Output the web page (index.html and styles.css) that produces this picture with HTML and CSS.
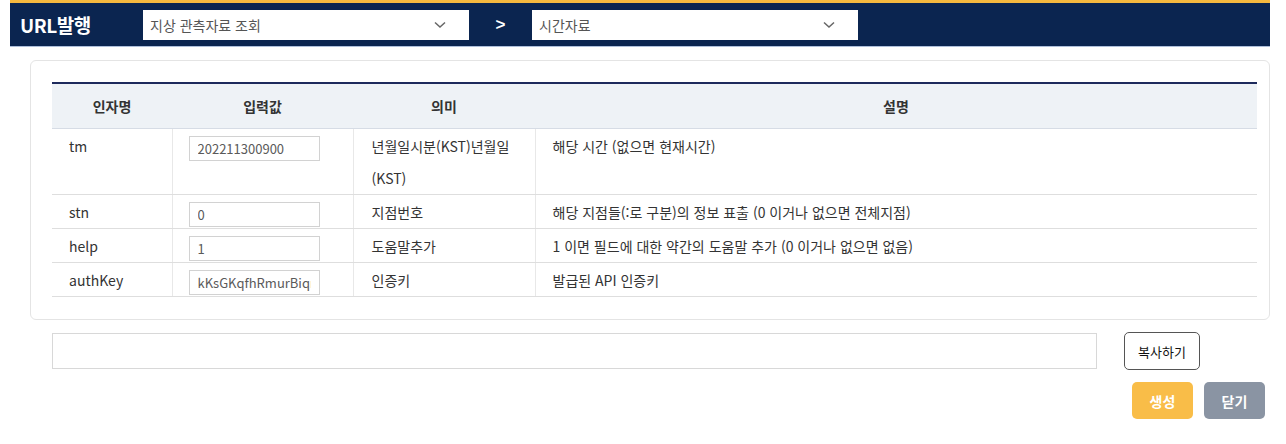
FILE: index.html
```html
<!DOCTYPE html>
<html lang="ko">

<head>
  <meta charset="UTF-8">
  <meta name="viewport" content="width=device-width, initial-scale=1.0">
  <title>URL발행</title>
  <link rel="stylesheet" href="styles.css">
</head>

<body>
  <!-- 상단 선택 바 -->
  <div class="topbar">
    <h1 class="title">URL발행</h1>
    <div class="select">
      <span>지상 관측자료 조회</span>
      <svg width="12" height="8" viewBox="0 0 12 8"><path d="M1 1.5l5 4.5 5-4.5" fill="none" stroke="#666" stroke-width="1.5"/></svg>
    </div>
    <div class="arrow">&gt;</div>
    <div class="select">
      <span>시간자료</span>
      <svg width="12" height="8" viewBox="0 0 12 8"><path d="M1 1.5l5 4.5 5-4.5" fill="none" stroke="#666" stroke-width="1.5"/></svg>
    </div>
  </div>

  <!-- 인자 목록 -->
  <div class="card">
    <table class="params">
      <colgroup>
        <col style="width: 120px;">
        <col style="width: 181px;">
        <col style="width: 182px;">
        <col>
      </colgroup>
      <thead>
        <tr>
          <th>인자명</th>
          <th>입력값</th>
          <th>의미</th>
          <th>설명</th>
        </tr>
      </thead>
      <tbody>
        <tr>
          <td>tm</td>
          <td><input type="text" value="202211300900"></td>
          <td>년월일시분(KST)년월일<br>(KST)</td>
          <td>해당 시간 (없으면 현재시간)</td>
        </tr>
        <tr>
          <td>stn</td>
          <td><input type="text" value="0"></td>
          <td>지점번호</td>
          <td>해당 지점들(:로 구분)의 정보 표출 (0 이거나 없으면 전체지점)</td>
        </tr>
        <tr>
          <td>help</td>
          <td><input type="text" value="1"></td>
          <td>도움말추가</td>
          <td>1 이면 필드에 대한 약간의 도움말 추가 (0 이거나 없으면 없음)</td>
        </tr>
        <tr>
          <td>authKey</td>
          <td><input type="text" value="kKsGKqfhRmurBiqrM3Y"></td>
          <td>인증키</td>
          <td>발급된 API 인증키</td>
        </tr>
      </tbody>
    </table>
  </div>

  <!-- 생성된 URL -->
  <div class="url-row">
    <input type="text" class="url-box" id="url">
    <button class="btn-copy">복사하기</button>
  </div>

  <div class="actions">
    <button class="btn btn-make">생성</button>
    <button class="btn btn-close">닫기</button>
  </div>
</body>

</html>
```

FILE: styles.css
```css
body {
  margin: 0;
  padding: 0 16px 0 10px;
  font-family: "Noto Sans CJK KR", "Noto Sans", sans-serif;
  color: #333;
  background: #fff;
}

/* 상단 바 */
.topbar {
  display: flex;
  align-items: center;
  height: 43px;
  background-color: #0b2550;
  border-top: 3px solid #f6b93f;
  border-bottom: 1px solid #aebfdb;
}

.title {
  width: 123px;
  margin: 0;
  padding-left: 10px;
  font-size: 19px;
  font-weight: bold;
  color: #fff;
  letter-spacing: -0.5px;
}

.select {
  display: flex;
  align-items: center;
  justify-content: space-between;
  box-sizing: border-box;
  width: 326px;
  height: 30px;
  padding: 0 23px 0 7px;
  background: #fff;
  font-size: 14px;
  color: #555;
}

.arrow {
  width: 63px;
  text-align: center;
  font-family: "Liberation Sans", Arial, sans-serif;
  font-size: 17px;
  font-weight: bold;
  color: #fff;
}

/* 인자 테이블 카드 */
.card {
  margin: 13px 0 0 20px;
  padding: 21px 12px 22px 21px;
  border: 1px solid #e4e4e4;
  border-radius: 6px;
}

.params {
  width: 100%;
  border-collapse: collapse;
  border-top: 2px solid #1d2a5c;
  table-layout: fixed;
  font-size: 14px;
}

.params th {
  height: 44px;
  padding: 0;
  background-color: #eef2f6;
  border-bottom: 1px solid #d6dce5;
  font-weight: bold;
  color: #333;
}

.params td {
  padding: 1px 17px 0;
  line-height: 32px;
  vertical-align: top;
  border-bottom: 1px solid #dedede;
  border-left: 1px solid #e8e8e8;
  color: #333;
}

.params td:first-child {
  border-left: none;
}

.params td:nth-child(2) {
  padding-left: 16px;
}

.params td:nth-child(3) {
  padding-left: 18px;
}

.params input {
  box-sizing: border-box;
  width: 131px;
  height: 25px;
  padding: 0 8px;
  border: 1px solid #d2d2d2;
  font-family: inherit;
  font-size: 13px;
  color: #5a5a5a;
  vertical-align: middle;
}

/* 하단 URL 영역 */
.url-row {
  display: flex;
  align-items: center;
  gap: 27px;
  margin: 12px 0 0 42px;
}

.url-box {
  box-sizing: border-box;
  width: 1045px;
  height: 36px;
  border: 1px solid #d8d8d8;
}

.btn-copy {
  width: 76px;
  height: 38px;
  background: #fff;
  border: 1.5px solid #555;
  border-radius: 5px;
  font-family: inherit;
  font-size: 13px;
  color: #111;
}

.actions {
  display: flex;
  justify-content: flex-end;
  gap: 11px;
  margin-top: 12px;
  padding-right: 5px;
}

.btn {
  width: 61px;
  height: 37px;
  border: none;
  border-radius: 5px;
  font-family: inherit;
  font-size: 14px;
  font-weight: bold;
  color: #fff;
}

.btn-make {
  background-color: #f9bd48;
}

.btn-close {
  background-color: #8a94a3;
}
```
